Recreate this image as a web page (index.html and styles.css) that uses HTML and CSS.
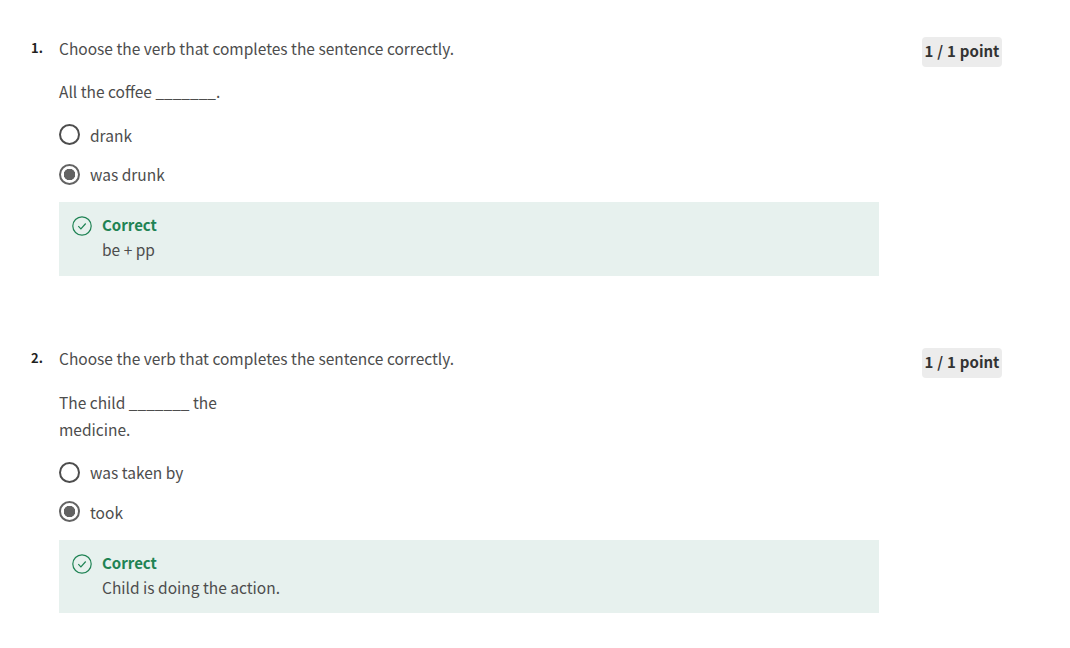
FILE: index.html
```html
<!DOCTYPE html>
<html lang="en">
<head>
    <meta charset="UTF-8">
    <title>Quiz results</title>
    <link rel="stylesheet" href="styles.css">
</head>
<body>
    <!-- Question 1 -->
    <div class="question">
        <div class="number">1.</div>
        <div class="content">
            <p class="prompt">Choose the verb that completes the sentence correctly.</p>
            <p class="sentence">All the coffee _______.</p>
            <div class="option">
                <span class="radio"></span>
                <span>drank</span>
            </div>
            <div class="option">
                <span class="radio checked"></span>
                <span>was drunk</span>
            </div>
            <div class="feedback">
                <svg class="check" width="20" height="20" viewBox="0 0 20 20" fill="none">
                    <circle cx="10" cy="10" r="9.2" stroke="#1f8354" stroke-width="1.2"/>
                    <path d="M6.3 10.2l2.6 2.7 4.8-5.4" stroke="#1f8354" stroke-width="1.2"/>
                </svg>
                <div>
                    <div class="correct">Correct</div>
                    <div>be + pp</div>
                </div>
            </div>
        </div>
        <div class="points">1 / 1 point</div>
    </div>

    <!-- Question 2 -->
    <div class="question">
        <div class="number">2.</div>
        <div class="content">
            <p class="prompt">Choose the verb that completes the sentence correctly.</p>
            <p class="sentence narrow">The child _______ the medicine.</p>
            <div class="option">
                <span class="radio"></span>
                <span>was taken by</span>
            </div>
            <div class="option">
                <span class="radio checked"></span>
                <span>took</span>
            </div>
            <div class="feedback">
                <svg class="check" width="20" height="20" viewBox="0 0 20 20" fill="none">
                    <circle cx="10" cy="10" r="9.2" stroke="#1f8354" stroke-width="1.2"/>
                    <path d="M6.3 10.2l2.6 2.7 4.8-5.4" stroke="#1f8354" stroke-width="1.2"/>
                </svg>
                <div>
                    <div class="correct">Correct</div>
                    <div>Child is doing the action.</div>
                </div>
            </div>
        </div>
        <div class="points">1 / 1 point</div>
    </div>
</body>
</html>
```

FILE: styles.css
```css
body {
    margin: 0;
    padding: 36px 68px 0 31px;
    background-color: #fff;
    color: #4d4d4d;
    font-family: 'Noto Sans CJK KR', 'Noto Sans', sans-serif;
    font-size: 15.5px;
    line-height: 24px;
}
.question {
    display: flex;
    align-items: flex-start;
}
.question + .question {
    margin-top: 70.5px;
}
.number {
    width: 28px;
    flex-shrink: 0;
    font-size: 13px;
    font-weight: 700;
    color: #1f1f1f;
}
.content {
    width: 820px;
    flex-shrink: 0;
}
.prompt {
    margin: 0 0 18.4px;
}
.sentence {
    margin: 0 0 17.6px;
    line-height: 27px;
}
.narrow {
    width: 170px;
}
.option {
    display: flex;
    align-items: center;
    gap: 10.5px;
    height: 24px;
    margin-bottom: 15.2px;
}
.radio {
    width: 21px;
    height: 21px;
    margin-left: -0.5px;
    box-sizing: border-box;
    border: 2px solid #4d4d4d;
    border-radius: 50%;
    background: #fff;
}
.radio.checked {
    border-color: #636363;
    background: radial-gradient(circle, #636363 0, #636363 5.5px, #fff 6px);
}
.feedback {
    display: flex;
    gap: 10px;
    height: 73.6px;
    box-sizing: border-box;
    margin-top: 16.1px;
    padding: 11px 13px;
    background: #e7f1ee;
}
.check {
    flex-shrink: 0;
    margin-top: 3px;
}
.correct {
    color: #1f8354;
    font-size: 15px;
    font-weight: 700;
}
.points {
    margin: 1.2px 0 0 43px;
    width: 80px;
    height: 30px;
    line-height: 28px;
    text-align: center;
    border-radius: 4px;
    background: #ececec;
    color: #333;
    font-size: 15px;
    font-weight: 700;
    word-spacing: 0.5px;
    white-space: nowrap;
}
```
